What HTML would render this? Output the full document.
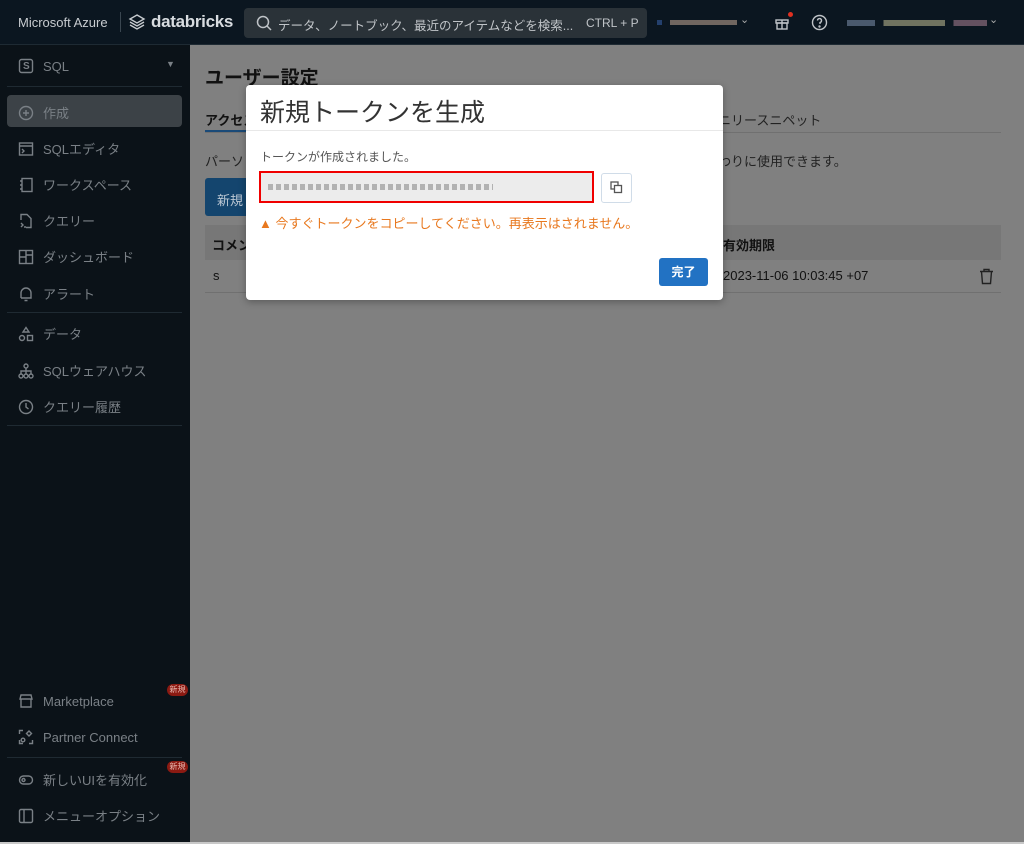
<!DOCTYPE html>
<html><head><meta charset="utf-8"><style>
*{box-sizing:border-box;margin:0;padding:0}
body{width:1024px;height:844px;overflow:hidden;background:#808080;font-family:"Liberation Sans","Noto Sans CJK JP",sans-serif;position:relative}
.top{position:absolute;left:0;top:0;width:1024px;height:45px;background:#0b1620;border-bottom:1px solid #1e2a33}
.side{position:absolute;left:0;top:45px;width:190px;height:797px;background:#0b1218}
.t{position:absolute;white-space:nowrap}
.it{position:absolute;left:18px;color:#7a8086;font-size:13px;display:flex;align-items:center;gap:9px}
.it svg{width:16px;height:16px;stroke:#7a8086;fill:none;stroke-width:1.4}
.sep{position:absolute;left:7px;width:175px;height:1px;background:#1f2a32}
.badge{position:absolute;left:167px;width:21px;height:12px;border-radius:6px;background:#8b1a12;color:#e8b8b0;font-size:8px;text-align:center;line-height:12px}
.modal{position:absolute;left:246px;top:85px;width:477px;height:215px;background:#fff;border-radius:4px;box-shadow:0 2px 8px rgba(0,0,0,.3)}
</style></head><body>
<div class="top">
 <div class="t" style="left:18px;top:15px;color:#c8ccd0;font-size:13px">Microsoft Azure</div>
 <div style="position:absolute;left:120px;top:12px;width:1px;height:20px;background:#3a4650"></div>
 <svg style="position:absolute;left:128px;top:13px" width="18" height="18" viewBox="0 0 18 18" fill="none" stroke="#c8ccd0" stroke-width="1.4"><path d="M9 2L16 6L9 10L2 6Z"/><path d="M2 9L9 13L16 9"/><path d="M2 12L9 16L16 12"/></svg>
 <div class="t" style="left:151px;top:12px;color:#d8dce0;font-size:17px;font-weight:bold;letter-spacing:-0.3px">databricks</div>
 <div style="position:absolute;left:244px;top:8px;width:403px;height:30px;background:#2a3238;border-radius:4px"></div>
 <svg style="position:absolute;left:256px;top:15px" width="16" height="16" viewBox="0 0 16 16" fill="none" stroke="#c0c4c8" stroke-width="1.5"><circle cx="7" cy="7" r="5.5"/><path d="M11 11L15 15"/></svg>
 <div class="t" style="left:278px;top:15px;color:#c0c4c8;font-size:12.5px">データ、ノートブック、最近のアイテムなどを検索...</div>
 <div class="t" style="left:586px;top:16px;color:#c0c4c8;font-size:12px">CTRL + P</div>
 <div style="position:absolute;left:657px;top:20px;width:80px;height:5px;background:linear-gradient(90deg,#2a4a80 0 6%,#0b1620 6% 16%,#8a7a70 16% 100%);opacity:.8"></div>
 <div class="t" style="left:740px;top:13px;color:#aaa;font-size:11px">⌄</div>
 <svg style="position:absolute;left:774px;top:14px" width="16" height="16" viewBox="0 0 16 16" fill="none" stroke="#c0c4c8" stroke-width="1.4"><rect x="2" y="6" width="12" height="3"/><rect x="3" y="9" width="10" height="6"/><path d="M8 6V15"/></svg>
 <div style="position:absolute;left:788px;top:12px;width:5px;height:5px;border-radius:50%;background:#e03020"></div>
 <svg style="position:absolute;left:811px;top:14px" width="17" height="17" viewBox="0 0 17 17" fill="none" stroke="#c0c4c8" stroke-width="1.4"><circle cx="8.5" cy="8.5" r="7"/><path d="M6.5 6.5a2 2 0 1 1 2.5 2V10"/><circle cx="8.5" cy="12.5" r=".5" fill="#c0c4c8"/></svg>
 <div style="position:absolute;left:847px;top:20px;width:140px;height:6px;background:linear-gradient(90deg,#5a6a80 0 20%,#0b1620 20% 26%,#8a8a70 26% 70%,#0b1620 70% 76%,#7a6070 76% 100%);opacity:.8"></div>
 <div class="t" style="left:989px;top:13px;color:#aaa;font-size:11px">⌄</div>
</div>
<div class="side">
 <div class="it" style="top:13px"><svg viewBox="0 0 16 16"><rect x="1.5" y="1.5" width="13" height="13" rx="2"/></svg><span style="position:absolute;left:5px;font-size:10px;font-weight:bold">S</span>SQL</div>
 <div class="t" style="left:166px;top:14px;color:#7a8086;font-size:9px">▼</div>
 <div class="sep" style="top:41px"></div>
 <div style="position:absolute;left:7px;top:50px;width:175px;height:32px;background:#3c4247;border-radius:4px"></div>
 <div class="it" style="top:58px"><svg viewBox="0 0 16 16"><circle cx="8" cy="8" r="6.5"/><path d="M8 5V11M5 8H11"/></svg>作成</div>
 <div class="it" style="top:94px"><svg viewBox="0 0 16 16"><rect x="1.5" y="2" width="13" height="12"/><path d="M1.5 5H14.5M4 8L6 10L4 12"/></svg>SQLエディタ</div>
 <div class="it" style="top:130px"><svg viewBox="0 0 16 16"><rect x="4" y="1.5" width="10" height="13"/><path d="M2 4H4M2 8H4M2 12H4"/></svg>ワークスペース</div>
 <div class="it" style="top:166px"><svg viewBox="0 0 16 16"><path d="M3 7V1.5H9L13 5.5V14.5H8"/><path d="M3 10L5 12L3 14M6 14H8"/></svg>クエリー</div>
 <div class="it" style="top:202px"><svg viewBox="0 0 16 16"><rect x="1.5" y="1.5" width="13" height="13"/><path d="M8 1.5V14.5M1.5 8H8M8 6H14.5"/></svg>ダッシュボード</div>
 <div class="it" style="top:239px"><svg viewBox="0 0 16 16"><path d="M3 12V7a5 5 0 0 1 10 0V12H3M6.5 14.5H9.5"/></svg>アラート</div>
 <div class="sep" style="top:267px"></div>
 <div class="it" style="top:279px"><svg viewBox="0 0 16 16"><path d="M8 1.5L11 6H5Z"/><circle cx="4" cy="12" r="2.5"/><rect x="9.5" y="9.5" width="5" height="5"/></svg>データ</div>
 <div class="it" style="top:316px"><svg viewBox="0 0 16 16"><circle cx="8" cy="3" r="2"/><circle cx="3" cy="13" r="2"/><circle cx="8" cy="13" r="2"/><circle cx="13" cy="13" r="2"/><path d="M8 5V11M3 11V8H13V11"/></svg>SQLウェアハウス</div>
 <div class="it" style="top:352px"><svg viewBox="0 0 16 16"><circle cx="8" cy="8" r="6.5"/><path d="M8 4V8L10.5 10"/></svg>クエリー履歴</div>
 <div class="sep" style="top:380px"></div>
 <div class="badge" style="top:639px">新規</div>
 <div class="it" style="top:648px"><svg viewBox="0 0 16 16"><path d="M2 6L3 2H13L14 6H2ZM3 6V14H13V6"/></svg>Marketplace</div>
 <div class="it" style="top:684px"><svg viewBox="0 0 16 16"><path d="M1.5 5V1.5H5M1.5 11V14.5H5M11 14.5H14.5V11"/><circle cx="5" cy="11" r="1.8"/><path d="M11 2L13.5 4.5L11 7L8.5 4.5Z"/></svg>Partner Connect</div>
 <div class="sep" style="top:712px"></div>
 <div class="badge" style="top:716px">新規</div>
 <div class="it" style="top:725px"><svg viewBox="0 0 16 16"><rect x="1.5" y="4" width="13" height="8" rx="4"/><circle cx="5.5" cy="8" r="1.5"/></svg>新しいUIを有効化</div>
 <div class="it" style="top:761px"><svg viewBox="0 0 16 16"><rect x="1.5" y="1.5" width="13" height="13" rx="1.5"/><path d="M6 1.5V14.5"/></svg>メニューオプション</div>
</div>
<div style="position:absolute;left:0;top:842px;width:1024px;height:2px;background:#c8c8c8"></div>
<div class="t" style="left:205px;top:63px;font-size:19px;font-weight:bold;color:#111">ユーザー設定</div>
<div class="t" style="left:205px;top:110px;font-size:13px;font-weight:bold;color:#111">アクセス</div>
<div style="position:absolute;left:205px;top:130px;width:60px;height:2px;background:#1a4a78"></div>
<div style="position:absolute;left:205px;top:132px;width:796px;height:1px;background:#707070"></div>
<div class="t" style="left:718px;top:110px;font-size:13px;color:#222">ニリースニペット</div>
<div class="t" style="left:205px;top:151px;font-size:13px;color:#222">パーソ</div>
<div class="t" style="left:718px;top:151px;font-size:13px;color:#222">わりに使用できます。</div>
<div style="position:absolute;left:205px;top:178px;width:60px;height:38px;background:#14456e;border-radius:3px"></div>
<div class="t" style="left:217px;top:190px;font-size:13px;color:#bcc8d4">新規</div>
<div style="position:absolute;left:205px;top:225px;width:796px;height:35px;background:#777"></div>
<div class="t" style="left:212px;top:235px;font-size:13px;font-weight:bold;color:#111">コメント</div>
<div class="t" style="left:723px;top:235px;font-size:13px;font-weight:bold;color:#111">有効期限</div>
<div class="t" style="left:213px;top:268px;font-size:13px;color:#111">s</div>
<div class="t" style="left:723px;top:268px;font-size:13px;color:#111">2023-11-06 10:03:45 +07</div>
<svg style="position:absolute;left:979px;top:268px" width="15" height="17" viewBox="0 0 15 17" fill="none" stroke="#222" stroke-width="1.4"><path d="M1 3.5H14M5 3.5V1.5H10V3.5M2.5 3.5L3.5 15.5H11.5L12.5 3.5"/></svg>
<div style="position:absolute;left:205px;top:292px;width:796px;height:1px;background:#707070"></div>
<div class="modal">
 <div class="t" style="left:14px;top:8px;font-size:25px;color:#333">新規トークンを生成</div>
 <div style="position:absolute;left:0;top:45px;width:477px;height:1px;background:#e8e8e8"></div>
 <div class="t" style="left:14px;top:63px;font-size:12px;color:#555">トークンが作成されました。</div>
 <div style="position:absolute;left:13px;top:86px;width:335px;height:32px;border:2px solid #f00000;background:#ececec"></div>
 <div style="position:absolute;left:22px;top:99px;width:225px;height:6px;background:repeating-linear-gradient(90deg,#999 0 5px,#ececec 5px 8px);opacity:.7"></div>
 <div style="position:absolute;left:355px;top:88px;width:31px;height:30px;border:1px solid #d0dce8;border-radius:3px"></div>
 <svg style="position:absolute;left:364px;top:96px" width="13" height="13" viewBox="0 0 13 13" fill="none" stroke="#555" stroke-width="1.3"><rect x="1" y="1" width="7" height="7"/><rect x="4.5" y="4.5" width="7" height="7" fill="#fff"/></svg>
 <div class="t" style="left:13px;top:128px;font-size:13px;color:#e8781e">▲ 今すぐトークンをコピーしてください。再表示はされません。</div>
 <div style="position:absolute;left:413px;top:173px;width:49px;height:28px;background:#2272c3;border-radius:3px;color:#fff;font-size:12px;font-weight:bold;text-align:center;line-height:28px">完了</div>
</div>
</body></html>
